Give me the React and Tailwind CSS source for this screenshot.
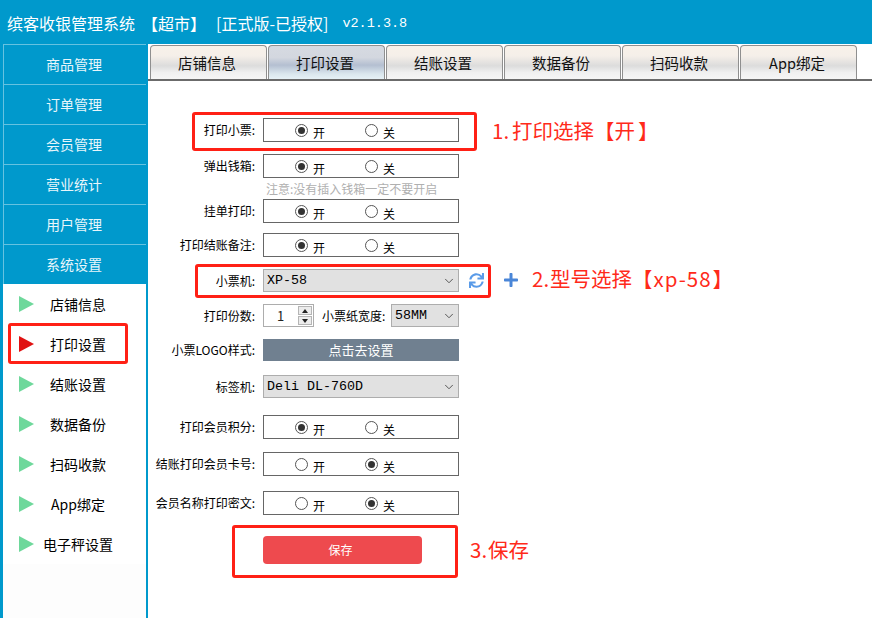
import React from 'react'
import { ChevronDown } from 'lucide-react'
import { FaSync, FaPlus } from 'react-icons/fa'

const cjk = "font-['Noto_Sans_CJK_SC','Noto_Sans',sans-serif]"
const mono = "font-['Liberation_Mono','Noto_Sans_CJK_SC',monospace]"

const groups = ['商品管理', '订单管理', '会员管理', '营业统计', '用户管理', '系统设置']
const subItems = ['店铺信息', '打印设置', '结账设置', '数据备份', '扫码收款', 'App绑定', '电子秤设置']
const tabs = ['店铺信息', '打印设置', '结账设置', '数据备份', '扫码收款', 'App绑定']

function Triangle({ active }) {
  return (
    <svg width="15" height="16" viewBox="0 0 15 16" className="shrink-0">
      <polygon points="0,0 15,8 0,16" fill={active ? '#e01212' : '#6ed89b'} />
    </svg>
  )
}

function Sidebar() {
  return (
    <div className="w-[148px] shrink-0 flex flex-col border-x-[3px] border-r-2 border-[#0099cc] bg-[#fdfdfd]">
      {groups.map(g => (
        <div key={g} className="h-10 shrink-0 flex items-center justify-center pr-[2px] bg-[#0099cc] border-t border-l border-[#66c2e0] text-[14px] text-[#e8f6fb]">
          {g}
        </div>
      ))}
      <div className="bg-white">
        {subItems.map((s, i) => (
          <div key={s} className="h-10 flex items-center pl-4 text-[14px] text-black">
            <Triangle active={i === 1} />
            <span className="w-[88px] text-center whitespace-nowrap">{s}</span>
          </div>
        ))}
      </div>
    </div>
  )
}

function Tabs() {
  return (
    <div className="h-[37px] shrink-0 flex items-end gap-px pl-[2px] border-b-2 border-[#6b6b6b]">
      {tabs.map((t, i) => (
        <div
          key={t}
          className={`w-[117px] h-[34px] flex items-center justify-center pr-[3px] rounded-t-[4px] border border-b-0 border-[#8f8f8f] text-[14.5px] text-[#111] ${
            i === 1
              ? 'bg-[linear-gradient(#d6dae1_0%,#d3d7df_35%,#b4bfd1_58%,#dbe7ee_85%,#e6f1f6_100%)]'
              : 'bg-[linear-gradient(#f8f1e9_0%,#f5efe9_30%,#dcdcdc_60%,#f0f0f0_80%,#f6f6f6_100%)]'
          }`}
        >
          {t}
        </div>
      ))}
    </div>
  )
}

function Radio({ on, label }) {
  return (
    <div className="flex items-center gap-[5px]">
      <span className="w-[13px] h-[13px] rounded-full border border-[#555] bg-white flex items-center justify-center">
        {on && <span className="w-[7px] h-[7px] rounded-full bg-[#333]" />}
      </span>
      <span className="text-[12px] leading-none mt-[5px] text-black">{label}</span>
    </div>
  )
}

function Row({ label, className = '', children }) {
  return (
    <div className={`flex items-center ${className}`}>
      <div className="w-[108px] shrink-0 text-right text-[12px] text-black whitespace-nowrap pr-px">{label}:</div>
      <div className="ml-[7px]">{children}</div>
    </div>
  )
}

function OnOff({ label, on = true, className = '' }) {
  return (
    <Row label={label} className={className}>
      <div className="w-[196px] h-6 border border-[#666] bg-white flex items-center pl-[31px] gap-[40px]">
        <Radio on={on} label="开" />
        <Radio on={!on} label="关" />
      </div>
    </Row>
  )
}

function Select({ value, width = 'w-[196px]' }) {
  return (
    <div className={`${width} h-[23px] border border-[#adadad] bg-[#e1e1e1] flex items-center justify-between pl-[3px] pr-[2px]`}>
      <span className={`${mono} text-[13.33px] text-black whitespace-nowrap`}>{value}</span>
      <ChevronDown size={14} strokeWidth={1.5} className="text-[#444]" />
    </div>
  )
}

function Form() {
  return (
    <div className="pt-[37px] flex flex-col">
      <OnOff label="打印小票" />
      <OnOff label="弹出钱箱" className="mt-3" />
      <div className="h-[21px] ml-[118px] pt-[3px] text-[12px] leading-[16px] text-[#b0b0b0] whitespace-nowrap">注意:没有插入钱箱一定不要开启</div>
      <OnOff label="挂单打印" />
      <OnOff label="打印结账备注" className="mt-[10px]" />

      <Row label="小票机" className="mt-3">
        <div className="flex items-center gap-[10px]">
          <Select value="XP-58" />
          <FaSync size={15} className="text-[#5a9be8]" />
        </div>
      </Row>

      <Row label="打印份数" className="mt-3">
        <div className="flex items-center">
          <div className="w-[51px] h-[23px] border border-[#adadad] bg-white flex items-center justify-between pr-[1px]">
            <span className="w-[33px] text-center text-[13px] text-[#222]">1</span>
            <div className="w-[14px] h-[19px] flex flex-col gap-px">
              <span className="flex-1 bg-[#ececec] border border-[#b5b5b5] flex items-center justify-center">
                <span className="w-0 h-0 border-x-[3px] border-x-transparent border-b-[4px] border-b-[#222]" />
              </span>
              <span className="flex-1 bg-[#ececec] border border-[#b5b5b5] flex items-center justify-center">
                <span className="w-0 h-0 border-x-[3px] border-x-transparent border-t-[4px] border-t-[#222]" />
              </span>
            </div>
          </div>
          <span className="ml-2 w-[63px] text-[12px] text-black whitespace-nowrap">小票纸宽度:</span>
          <div className="ml-[6px]">
            <Select value="58MM" width="w-[68px]" />
          </div>
        </div>
      </Row>

      <Row label="小票LOGO样式" className="mt-3">
        <div className="w-[196px] h-[22px] bg-[#708090] flex items-center justify-center text-[13px] text-white">点击去设置</div>
      </Row>

      <Row label="标签机" className="mt-[14px]">
        <Select value="Deli DL-760D" />
      </Row>

      <OnOff label="打印会员积分" className="mt-[17px]" />
      <OnOff label="结账打印会员卡号" on={false} className="mt-[13px]" />
      <OnOff label="会员名称打印密文" on={false} className="mt-[15px]" />

      <div className="mt-[21px] ml-[115px] w-[159px] h-7 rounded-[4px] bg-[#ee4a4e] flex items-center justify-center pr-[4px] text-[12px] text-white">保存</div>
    </div>
  )
}

// red marks someone drew over the screenshot
function Annotations() {
  const box = 'absolute border-[3px] border-[#ff2015] rounded-[3px]'
  const note = 'absolute text-[20.5px] leading-none text-[#ff2a1a] whitespace-nowrap'
  return (
    <>
      <div className={`${box} left-[192px] top-[112px] w-[285px] h-[39px]`} />
      <div className={`${box} left-[195px] top-[264px] w-[296px] h-[34px]`} />
      <div className={`${box} left-[232px] top-[525px] w-[226px] h-[53px]`} />
      <div className={`${box} left-[8px] top-[323px] w-[120px] h-[41px]`} />
      <div className={`${note} left-[492px] top-[120px]`}>
        1.<span className="ml-[3px]">打印选择</span>【开<span className="ml-[3px]">】</span>
      </div>
      <div className={`${note} left-[532px] top-[268px]`}>
        2.<span className="ml-[1px]">型号选择</span>【<span className="tracking-[1px] ml-[1px]">xp-58</span><span className="ml-[1px]">】</span>
      </div>
      <div className={`${note} left-[470px] top-[539px]`}>3.<span className="ml-[1px]">保存</span></div>
      <FaPlus size={16} className="absolute left-[503px] top-[272px] text-[#4a86d8]" />
    </>
  )
}

export default function App() {
  return (
    <div className={`${cjk} relative w-[872px] h-[618px] overflow-hidden bg-white flex flex-col`}>
      <div className="h-11 shrink-0 bg-[#0099cc] flex items-center pl-[7px] pt-[2px] text-[16px] text-white whitespace-nowrap">
        <span>缤客收银管理系统</span>
        <span className="ml-[7px]">【超市】</span>
        <span className="ml-[10px]">[正式版-已授权]</span>
        <span className={`${mono} ml-[14px] mt-[2px] text-[13.5px]`}>v2.1.3.8</span>
      </div>
      <div className="flex-1 flex min-h-0">
        <Sidebar />
        <div className="flex-1 flex flex-col min-w-0">
          <Tabs />
          <Form />
        </div>
      </div>
      <Annotations />
    </div>
  )
}
